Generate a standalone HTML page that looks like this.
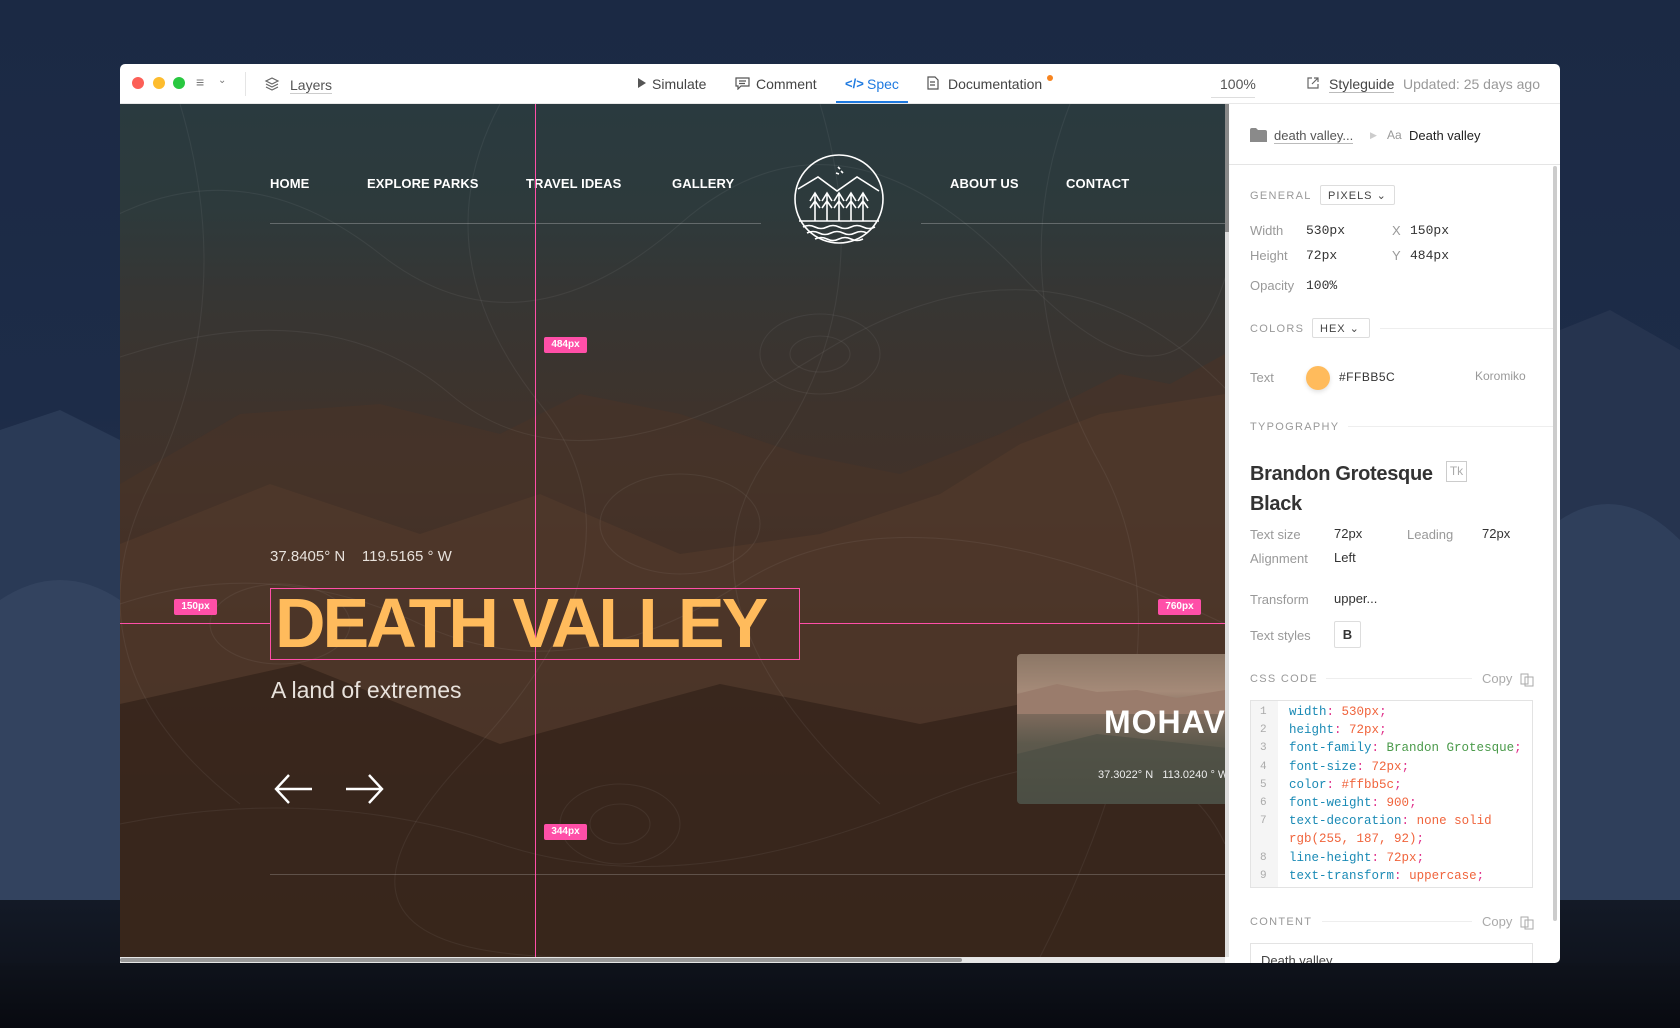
<!DOCTYPE html>
<html><head><meta charset="utf-8">
<style>
*{margin:0;padding:0;box-sizing:border-box}
body{width:1680px;height:1028px;overflow:hidden;position:relative;font-family:"Liberation Sans",sans-serif;
background:linear-gradient(180deg,#1b2944 0%,#1d2c48 40%,#24334f 60%,#151c2a 85%,#0b0e15 100%)}
.a{position:absolute}
.win{left:120px;top:64px;width:1440px;height:899px;background:#fff;border-radius:5px;overflow:hidden}
.tb{font-size:14px;color:#444;top:76px}
.canvas{left:120px;top:104px;width:1105px;height:853px;overflow:hidden;
background:linear-gradient(180deg,#2a3a3f 0%,#2d3a3c 12%,#363634 22%,#3e332c 36%,#40322a 45%,#3a2a22 60%,#31221b 80%,#2a1d17 100%)}
.nav{color:#fff;font-weight:bold;font-size:13px;top:176px;letter-spacing:.1px}
.lbl{background:#ff4fa8;color:#fff;font-size:10px;font-weight:bold;text-align:center;line-height:16px;border-radius:2px;height:16px;width:43px}
.pl{color:#999;font-size:13px}
.pv{color:#333;font-size:13px}
.hd{color:#999;font-size:11px;letter-spacing:1.3px}
.mono{font-family:"Liberation Mono",monospace}
.code div{height:18.2px;line-height:18.2px;white-space:pre}
.k{color:#1a8ab5}.v{color:#f0643c}.g{color:#4a9a4a}.p{color:#e0308a}
</style></head><body>
<svg class="a" style="left:0;top:0" width="1680" height="1028">
<path d="M0 430 L60 410 L120 440 L120 760 L0 760Z" fill="#2a3a56"/>
<path d="M0 600 Q60 560 120 600 L120 900 L0 900Z" fill="#33435f"/>
<path d="M1560 330 L1610 310 L1680 350 L1680 760 L1560 760Z" fill="#26344f"/>
<path d="M1560 520 Q1620 480 1680 540 L1680 900 L1560 900Z" fill="#2f3f5b"/>
</svg>
<div class="a win"></div>
<div class="a" style="left:132px;top:77px;width:12px;height:12px;border-radius:6px;background:#fc5f57"></div>
<div class="a" style="left:153px;top:77px;width:12px;height:12px;border-radius:6px;background:#fdbc2e"></div>
<div class="a" style="left:173px;top:77px;width:12px;height:12px;border-radius:6px;background:#29c840"></div>
<div class="a tb" style="left:196px;top:74px;color:#777">≡</div>
<div class="a tb" style="left:218px;top:75px;color:#777;font-size:10px">⌄</div>
<div class="a" style="left:245px;top:72px;width:1px;height:24px;background:#e5e5e5"></div>
<svg class="a" style="left:264px;top:76px" width="16" height="16"><path d="M8 2L14 5L8 8L2 5Z M2 8L8 11L14 8 M2 11L8 14L14 11" fill="none" stroke="#666" stroke-width="1.2"/></svg>
<div class="a tb" style="left:290px;top:77px;color:#555;border-bottom:1px solid #ccc">Layers</div>
<svg class="a" style="left:637px;top:77px" width="10" height="12"><path d="M1 1L9 6L1 11Z" fill="#555"/></svg>
<div class="a tb" style="left:652px">Simulate</div>
<svg class="a" style="left:735px;top:77px" width="15" height="13"><path d="M1 1H14V9H6L3 12V9H1Z M4 4H11 M4 6.5H10" fill="none" stroke="#555" stroke-width="1.2"/></svg>
<div class="a tb" style="left:756px">Comment</div>
<div class="a tb" style="left:845px;color:#1f7ae0;font-weight:bold;font-size:13px">&lt;/&gt;</div>
<div class="a tb" style="left:867px;color:#1f7ae0">Spec</div>
<div class="a" style="left:836px;top:101px;width:72px;height:3px;background:#1f7ae0"></div>
<svg class="a" style="left:927px;top:76px" width="12" height="14"><path d="M1 1H8L11 4V13H1Z M3 6H8 M3 9H8" fill="none" stroke="#555" stroke-width="1.2"/></svg>
<div class="a tb" style="left:948px">Documentation</div>
<div class="a" style="left:1047px;top:75px;width:6px;height:6px;border-radius:3px;background:#f7841f"></div>
<div class="a tb" style="left:1220px;color:#555">100%</div>
<div class="a" style="left:1211px;top:97px;width:44px;height:1px;background:#ddd"></div>
<svg class="a" style="left:1306px;top:76px" width="14" height="14"><path d="M6 2H2V12H12V8 M8 2H12V6 M12 2L6 8" fill="none" stroke="#666" stroke-width="1.2"/></svg>
<div class="a tb" style="left:1329px;border-bottom:1px solid #bbb">Styleguide</div>
<div class="a tb" style="left:1403px;color:#999">Updated: 25 days ago</div>
<div class="a" style="left:120px;top:103px;width:1440px;height:1px;background:#e8e8e8"></div>

<div class="a canvas">
<svg class="a" style="left:0;top:0" width="1105" height="853">
<path d="M0 380 L120 310 L260 300 L380 330 L460 290 L560 310 L680 350 L780 370 L880 330 L960 290 L1000 270 L1050 280 L1105 250 L1105 853 L0 853Z" fill="#4a3428" opacity=".6"/>
<path d="M0 440 L150 380 L300 430 L420 390 L560 450 L700 430 L820 390 L900 340 L980 310 L1105 290 L1105 853 L0 853Z" fill="#553b2c" opacity=".5"/>
<path d="M0 600 L180 560 L380 640 L600 580 L800 620 L1105 560 L1105 853 L0 853Z" fill="#24160f" opacity=".45"/>
<g fill="none" stroke="rgba(255,255,255,0.06)" stroke-width="1.1">
<path d="M-20 120 Q120 40 260 150 T560 120 T900 170 T1120 110"/>
<path d="M-20 260 Q200 180 330 290 T700 250 T1120 300"/>
<path d="M60 0 Q120 200 30 380 T120 700"/>
<path d="M380 0 Q300 150 420 300 T350 650 T450 853"/>
<path d="M700 0 Q760 200 650 350 T760 700"/>
<path d="M950 0 Q880 180 980 360 T920 853"/>
<path d="M0 500 Q150 450 300 520 T620 480 T1105 520"/>
<path d="M0 720 Q200 680 380 740 T800 700 T1105 740"/>
<ellipse cx="700" cy="250" rx="60" ry="40"/><ellipse cx="700" cy="250" rx="30" ry="18"/>
<ellipse cx="560" cy="420" rx="80" ry="50"/><ellipse cx="160" cy="520" rx="70" ry="40"/>
<ellipse cx="500" cy="720" rx="60" ry="40"/><ellipse cx="500" cy="720" rx="30" ry="20"/>
</g>
</svg>
<div class="a" style="left:150px;top:119px;width:491px;height:1px;background:rgba(255,255,255,.25)"></div>
<div class="a" style="left:801px;top:119px;width:304px;height:1px;background:rgba(255,255,255,.25)"></div>
<div class="a" style="left:150px;top:770px;width:955px;height:1px;background:rgba(255,255,255,.2)"></div>
<div class="a" style="left:897px;top:550px;width:220px;height:150px;border-radius:4px;overflow:hidden;background:linear-gradient(180deg,#8c7766 0%,#a58a78 25%,#7d6a5c 40%,#5d594c 60%,#4e5146 100%)">
<svg class="a" style="left:0;top:0" width="220" height="150"><path d="M0 40 L40 30 L80 38 L120 36 L160 44 L220 34 L220 60 L0 60Z" fill="#9a7c6c"/><path d="M0 150 L0 100 L80 80 L220 95 L220 150Z" fill="#4a4c42" opacity=".6"/></svg>
<div class="a" style="left:87px;top:50px;color:#fff;font-weight:bold;font-size:32px;letter-spacing:1px">MOHAVE</div>
<div class="a" style="left:81px;top:115px;color:#eee;font-size:11px">37.3022° N &nbsp;&nbsp;113.0240 ° W</div>
</div>
</div>
<div class="a nav" style="left:270px">HOME</div>
<div class="a nav" style="left:367px">EXPLORE PARKS</div>
<div class="a nav" style="left:526px">TRAVEL IDEAS</div>
<div class="a nav" style="left:672px">GALLERY</div>
<div class="a nav" style="left:950px">ABOUT US</div>
<div class="a nav" style="left:1066px">CONTACT</div>
<svg class="a" style="left:793px;top:153px" width="92" height="92"><g fill="none" stroke="#fff" stroke-width="1.6">
<circle cx="46" cy="46" r="44"/>
<path d="M5 36 L25 24 L44 38 L64 24 L86 38"/>
<path d="M45 14l2 2 M48 18l2 2 M43 20l3 1"/>
<path d="M22 40V68 M17 48L22 40L27 48 M17 55L22 48L27 55 M34 40V68 M29 48L34 40L39 48 M29 55L34 48L39 55 M46 40V68 M41 48L46 40L51 48 M41 55L46 48L51 55 M58 40V68 M53 48L58 40L63 48 M53 55L58 48L63 55 M70 40V68 M65 48L70 40L75 48 M65 55L70 48L75 55"/>
<path d="M6 68H86"/>
<path d="M10 74q6-3 12 0t12 0t12 0t12 0t12 0t12 0 M14 80q6-3 12 0t12 0t12 0t12 0t12 0 M22 86q6-3 12 0t12 0t12 0t12 0"/>
</g></svg>
<div class="a" style="left:535px;top:104px;width:1px;height:853px;background:#ff4fa8"></div>
<div class="a" style="left:120px;top:623px;width:150px;height:1px;background:#ff4fa8"></div>
<div class="a" style="left:799px;top:623px;width:426px;height:1px;background:#ff4fa8"></div>
<div class="a" style="left:270px;top:588px;width:530px;height:72px;border:1.5px solid #ff4fa8"></div>
<div class="a lbl" style="left:544px;top:337px">484px</div>
<div class="a lbl" style="left:174px;top:599px">150px</div>
<div class="a lbl" style="left:1158px;top:599px">760px</div>
<div class="a lbl" style="left:544px;top:824px">344px</div>
<div class="a" style="left:270px;top:548px;color:#e8e2dc;font-size:15px">37.8405° N &nbsp;&nbsp;&nbsp;119.5165 ° W</div>
<div class="a" style="left:275px;top:583px;color:#ffbb5c;font-weight:bold;font-size:70px;letter-spacing:-3px;line-height:80px">DEATH VALLEY</div>
<div class="a" style="left:271px;top:677px;color:#e8e2dc;font-size:23px">A land of extremes</div>
<svg class="a" style="left:274px;top:772px" width="112" height="34"><g fill="none" stroke="#fff" stroke-width="2.4"><path d="M2 17H38 M15 3L2 17L15 31"/><path d="M72 17H108 M95 3L108 17L95 31"/></g></svg>
<div class="a" style="left:120px;top:957px;width:1105px;height:6px;background:#e6e6e6"></div>
<div class="a" style="left:120px;top:958px;width:842px;height:4px;background:#999;border-radius:2px"></div>
<div class="a" style="left:1225px;top:104px;width:4px;height:853px;background:#ddd"></div>
<div class="a" style="left:1225px;top:104px;width:4px;height:128px;background:#888"></div>

<svg class="a" style="left:1250px;top:128px" width="17" height="14"><path d="M0 2Q0 0 2 0H6L8 2H15Q17 2 17 4V14H0Z" fill="#8a8a8a"/></svg>
<div class="a" style="left:1274px;top:128px;font-size:13px;color:#555;border-bottom:1px solid #bbb">death valley...</div>
<div class="a" style="left:1370px;top:130px;font-size:9px;color:#ccc">▶</div>
<div class="a" style="left:1387px;top:128px;font-size:12px;color:#999">Aa</div>
<div class="a" style="left:1409px;top:128px;font-size:13px;color:#222">Death valley</div>
<div class="a" style="left:1229px;top:164px;width:331px;height:1px;background:#e5e5e5"></div>
<div class="a" style="left:1553px;top:166px;width:4px;height:755px;background:#ccc;border-radius:2px"></div>

<div class="a hd" style="left:1250px;top:190px">GENERAL</div>
<div class="a" style="left:1320px;top:185px;width:75px;height:20px;border:1px solid #ddd;border-radius:2px;font-size:11px;color:#444;letter-spacing:1px;padding:3px 0 0 7px">PIXELS ⌄</div>
<div class="a pl" style="left:1250px;top:223px">Width</div><div class="a pv mono" style="left:1306px;top:223px">530px</div>
<div class="a pl" style="left:1392px;top:223px">X</div><div class="a pv mono" style="left:1410px;top:223px">150px</div>
<div class="a pl" style="left:1250px;top:248px">Height</div><div class="a pv mono" style="left:1306px;top:248px">72px</div>
<div class="a pl" style="left:1392px;top:248px">Y</div><div class="a pv mono" style="left:1410px;top:248px">484px</div>
<div class="a pl" style="left:1250px;top:278px">Opacity</div><div class="a pv mono" style="left:1306px;top:278px">100%</div>

<div class="a hd" style="left:1250px;top:323px">COLORS</div>
<div class="a" style="left:1312px;top:318px;width:58px;height:20px;border:1px solid #ddd;border-radius:2px;font-size:11px;color:#444;letter-spacing:1px;padding:3px 0 0 7px">HEX ⌄</div>
<div class="a" style="left:1380px;top:328px;width:173px;height:1px;background:#eee"></div>
<div class="a pl" style="left:1250px;top:370px">Text</div>
<div class="a" style="left:1306px;top:366px;width:24px;height:24px;border-radius:12px;background:#ffbb5c;box-shadow:0 2px 5px rgba(0,0,0,.12)"></div>
<div class="a pv" style="left:1339px;top:370px;font-size:12px;letter-spacing:.5px">#FFBB5C</div>
<div class="a pl" style="left:1475px;top:369px;font-size:12px">Koromiko</div>

<div class="a hd" style="left:1250px;top:421px">TYPOGRAPHY</div>
<div class="a" style="left:1348px;top:426px;width:205px;height:1px;background:#eee"></div>
<div class="a" style="left:1250px;top:459px;font-size:20px;font-weight:bold;color:#333;line-height:30px;letter-spacing:-.3px">Brandon Grotesque<br>Black</div>
<div class="a" style="left:1446px;top:461px;width:21px;height:21px;border:1px solid #ccc;font-size:12px;color:#aaa;text-align:center;line-height:19px">Tk</div>
<div class="a pl" style="left:1250px;top:527px">Text size</div><div class="a pv" style="left:1334px;top:526px">72px</div>
<div class="a pl" style="left:1407px;top:527px">Leading</div><div class="a pv" style="left:1482px;top:526px">72px</div>
<div class="a pl" style="left:1250px;top:551px">Alignment</div><div class="a pv" style="left:1334px;top:550px">Left</div>
<div class="a pl" style="left:1250px;top:592px">Transform</div><div class="a pv" style="left:1334px;top:591px">upper...</div>
<div class="a pl" style="left:1250px;top:628px">Text styles</div>
<div class="a" style="left:1334px;top:621px;width:27px;height:27px;border:1px solid #ddd;border-radius:2px;font-size:13px;font-weight:bold;color:#333;text-align:center;line-height:25px">B</div>

<div class="a hd" style="left:1250px;top:673px">CSS CODE</div>
<div class="a" style="left:1326px;top:678px;width:146px;height:1px;background:#eee"></div>
<div class="a" style="left:1482px;top:671px;font-size:13px;color:#aaa">Copy</div>
<svg class="a" style="left:1520px;top:673px" width="14" height="14"><path d="M1 1H8V11H1Z M5 4H13V13H5Z" fill="#fff" stroke="#aaa"/></svg>
<div class="a" style="left:1250px;top:700px;width:283px;height:188px;border:1px solid #e3e3e3;background:#fff"></div>
<div class="a" style="left:1251px;top:701px;width:27px;height:186px;background:#f5f5f5"></div>
<div class="a mono code" style="left:1260px;top:703px;font-size:11px;color:#aaa">
<div>1</div><div>2</div><div>3</div><div>4</div><div>5</div><div>6</div><div>7</div><div> </div><div>8</div><div>9</div></div>
<div class="a mono code" style="left:1289px;top:703px;font-size:12.5px">
<div><span class="k">width</span><span class="p">:</span> <span class="v">530px</span><span class="p">;</span></div>
<div><span class="k">height</span><span class="p">:</span> <span class="v">72px</span><span class="p">;</span></div>
<div><span class="k">font-family</span><span class="p">:</span> <span class="g">Brandon Grotesque</span><span class="p">;</span></div>
<div><span class="k">font-size</span><span class="p">:</span> <span class="v">72px</span><span class="p">;</span></div>
<div><span class="k">color</span><span class="p">:</span> <span class="v">#ffbb5c</span><span class="p">;</span></div>
<div><span class="k">font-weight</span><span class="p">:</span> <span class="v">900</span><span class="p">;</span></div>
<div><span class="k">text-decoration</span><span class="p">:</span> <span class="v">none solid</span></div>
<div><span class="v">rgb(255, 187, 92)</span><span class="p">;</span></div>
<div><span class="k">line-height</span><span class="p">:</span> <span class="v">72px</span><span class="p">;</span></div>
<div><span class="k">text-transform</span><span class="p">:</span> <span class="v">uppercase</span><span class="p">;</span></div>
</div>

<div class="a hd" style="left:1250px;top:916px">CONTENT</div>
<div class="a" style="left:1322px;top:921px;width:150px;height:1px;background:#eee"></div>
<div class="a" style="left:1482px;top:914px;font-size:13px;color:#aaa">Copy</div>
<svg class="a" style="left:1520px;top:916px" width="14" height="14"><path d="M1 1H8V11H1Z M5 4H13V13H5Z" fill="#fff" stroke="#aaa"/></svg>
<div class="a" style="left:1250px;top:943px;width:283px;height:20px;border:1px solid #e3e3e3;border-bottom:none;overflow:hidden"><div style="padding:9px 0 0 10px;font-size:13px;color:#444">Death valley</div></div>
<div class="a" style="left:0;top:963px;width:1680px;height:65px;background:linear-gradient(180deg,#0f131c,#080a10)"></div>
</body></html>
